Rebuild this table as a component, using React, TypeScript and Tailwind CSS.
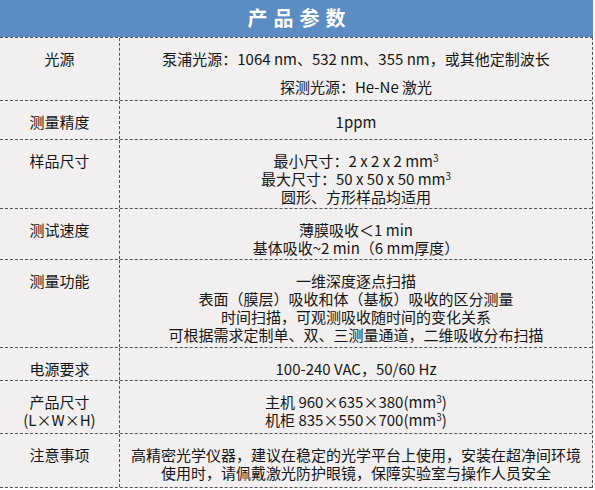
import React from "react";

type Row = {
  label: string[];
  lines: string[];
  h: string;
  gap?: boolean;
};

const rows: Row[] = [
  {
    label: ["光源"],
    lines: ["泵浦光源：1064 nm、532 nm、355 nm，或其他定制波长", "探测光源：He-Ne 激光"],
    h: "h-[63px]",
    gap: true,
  },
  { label: ["测量精度"], lines: ["1ppm"], h: "h-[39px]" },
  {
    label: ["样品尺寸"],
    lines: ["最小尺寸：2 x 2 x 2 mm³", "最大尺寸：50 x 50 x 50 mm³", "圆形、方形样品均适用"],
    h: "h-[69px]",
  },
  {
    label: ["测试速度"],
    lines: ["薄膜吸收＜1 min", "基体吸收~2 min（6 mm厚度）"],
    h: "h-[51px]",
  },
  {
    label: ["测量功能"],
    lines: [
      "一维深度逐点扫描",
      "表面（膜层）吸收和体（基板）吸收的区分测量",
      "时间扫描，可观测吸收随时间的变化关系",
      "可根据需求定制单、双、三测量通道，二维吸收分布扫描",
    ],
    h: "h-[88px]",
  },
  { label: ["电源要求"], lines: ["100-240 VAC，50/60 Hz"], h: "h-[33px]" },
  {
    label: ["产品尺寸", "(L×W×H)"],
    lines: ["主机 960×635×380(mm³)", "机柜 835×550×700(mm³)"],
    h: "h-[53px]",
  },
  {
    label: ["注意事项"],
    lines: [
      "高精密光学仪器，建议在稳定的光学平台上使用，安装在超净间环境",
      "使用时，请佩戴激光防护眼镜，保障实验室与操作人员安全",
    ],
    h: "h-[54px]",
  },
];

// render "³" as a small raised 3 like the original
const Line = ({ text }: { text: string }) => {
  const parts = text.split("³");
  return (
    <div className="whitespace-nowrap h-[18px]">
      {parts.map((p, i) => (
        <React.Fragment key={i}>
          {p}
          {i < parts.length - 1 && (
            <span className="text-[10px] leading-none relative top-[-5px]">3</span>
          )}
        </React.Fragment>
      ))}
    </div>
  );
};

export default function App() {
  return (
    <div
      className="w-[595px] h-[490px] bg-white text-[#161616] text-[15px] leading-[18px]"
      style={{ fontFamily: '"Noto Sans CJK SC", "Noto Sans", sans-serif' }}
    >
      <div className="w-[593px] bg-[#f1eff0]">
        <div className="h-[37px] bg-[#5c8cc4] flex items-center justify-center pb-[1px]">
          <span className="text-white text-[20px] font-bold tracking-[6px] pl-[6px]">产品参数</span>
        </div>
        <div className="border-t border-r border-dashed border-[#555]">
          {rows.map((r, i) => (
            <div
              key={i}
              className={`grid grid-cols-[120px_1fr] border-b border-dashed border-[#555] ${r.h}`}
            >
              <div className="border-r border-dashed border-[#555] pt-[12px] flex flex-col items-center">
                {r.label.map((l, j) => (
                  <div key={j}>{l}</div>
                ))}
              </div>
              <div className={`pt-[12px] flex flex-col items-center ${r.gap ? "gap-[10px]" : ""}`}>
                {r.lines.map((l, j) => (
                  <Line key={j} text={l} />
                ))}
              </div>
            </div>
          ))}
        </div>
      </div>
    </div>
  );
}
